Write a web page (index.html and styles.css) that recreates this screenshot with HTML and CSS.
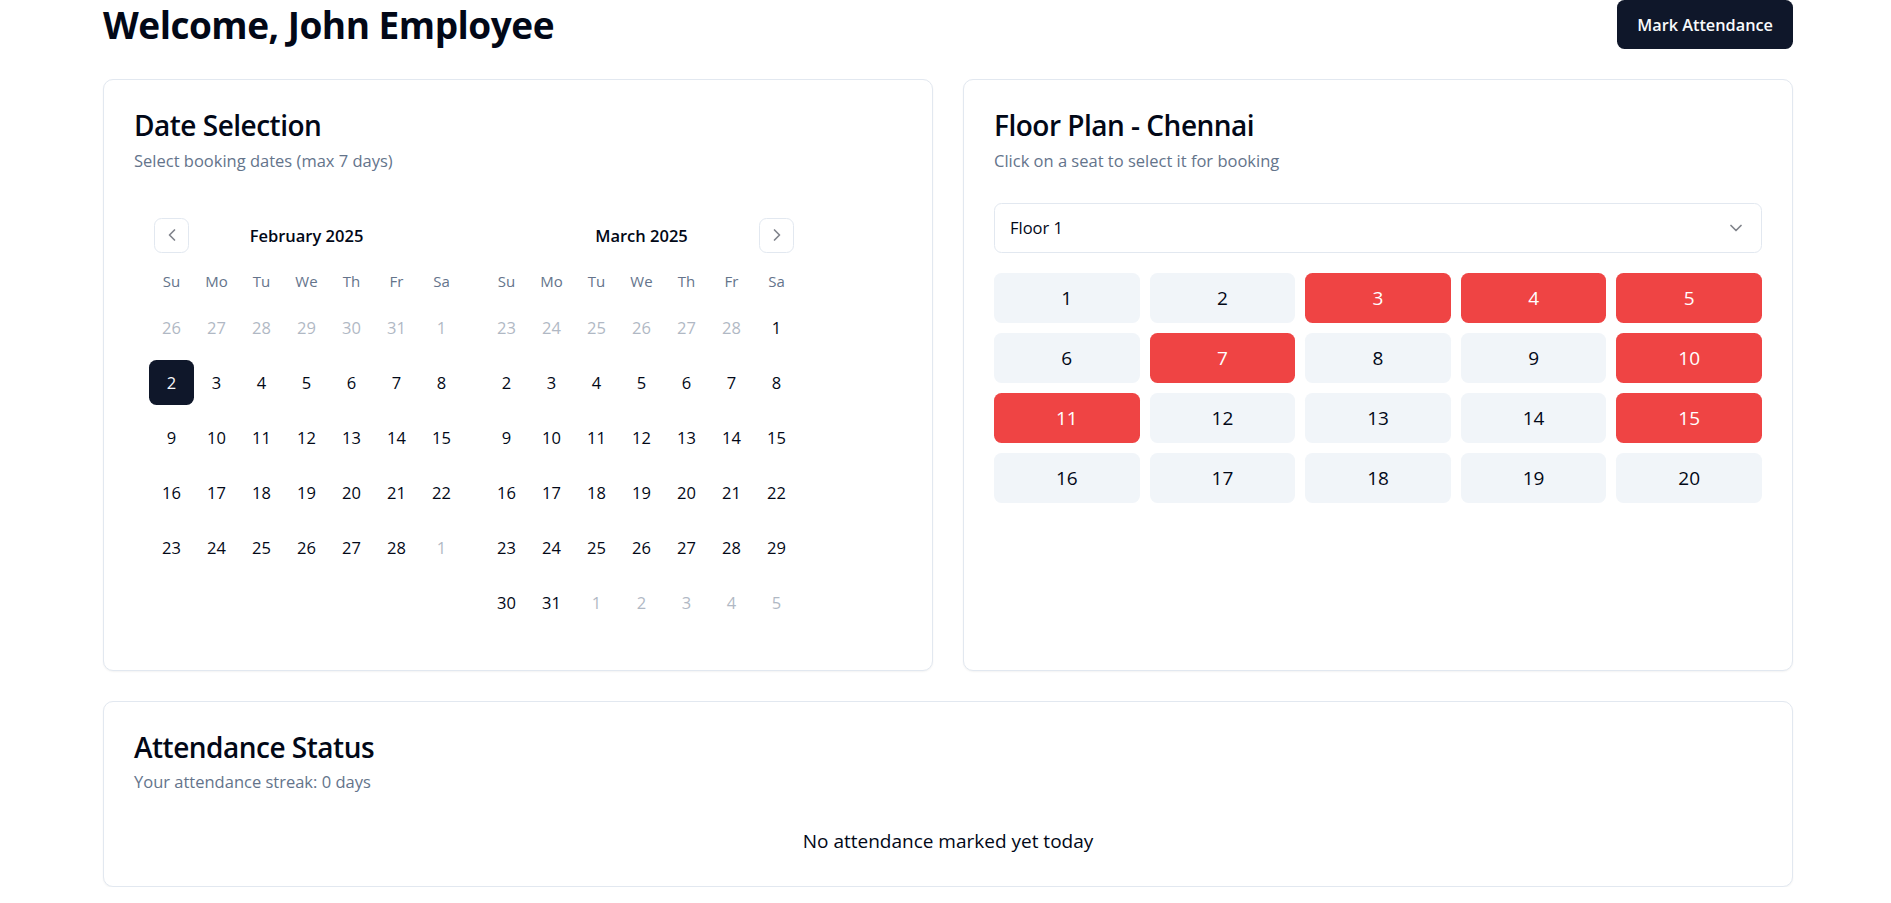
FILE: index.html
```html
<!DOCTYPE html>
<html lang="en">
<head>
<meta charset="utf-8">
<title>Dashboard</title>
<link rel="stylesheet" href="styles.css">
</head>
<body>
<main class="page">
  <header class="topbar">
    <h1 class="welcome">Welcome, John Employee</h1>
    <button class="btn-primary">Mark Attendance</button>
  </header>

  <section class="grid-two">
    <div class="card">
      <div class="card-header">
        <h2 class="card-title">Date Selection</h2>
        <p class="card-desc">Select booking dates (max 7 days)</p>
      </div>
      <div class="card-content">
        <div class="calendar">
          <div class="month">
            <div class="caption">
              <button class="nav-btn"><svg viewBox="0 0 24 24" width="20" height="20" fill="none" stroke="currentColor" stroke-width="2" stroke-linecap="round" stroke-linejoin="round"><path d="m15 18-6-6 6-6"/></svg></button>
              <span class="caption-label">February 2025</span>
              <span class="nav-spacer"></span>
            </div>
            <div class="days">
              <div class="head">Su</div><div class="head">Mo</div><div class="head">Tu</div><div class="head">We</div><div class="head">Th</div><div class="head">Fr</div><div class="head">Sa</div>
              <div class="day out">26</div><div class="day out">27</div><div class="day out">28</div><div class="day out">29</div><div class="day out">30</div><div class="day out">31</div><div class="day out">1</div>
              <div class="day selected">2</div><div class="day">3</div><div class="day">4</div><div class="day">5</div><div class="day">6</div><div class="day">7</div><div class="day">8</div>
              <div class="day">9</div><div class="day">10</div><div class="day">11</div><div class="day">12</div><div class="day">13</div><div class="day">14</div><div class="day">15</div>
              <div class="day">16</div><div class="day">17</div><div class="day">18</div><div class="day">19</div><div class="day">20</div><div class="day">21</div><div class="day">22</div>
              <div class="day">23</div><div class="day">24</div><div class="day">25</div><div class="day">26</div><div class="day">27</div><div class="day">28</div><div class="day out">1</div>
            </div>
          </div>
          <div class="month">
            <div class="caption">
              <span class="nav-spacer"></span>
              <span class="caption-label">March 2025</span>
              <button class="nav-btn"><svg viewBox="0 0 24 24" width="20" height="20" fill="none" stroke="currentColor" stroke-width="2" stroke-linecap="round" stroke-linejoin="round"><path d="m9 18 6-6-6-6"/></svg></button>
            </div>
            <div class="days">
              <div class="head">Su</div><div class="head">Mo</div><div class="head">Tu</div><div class="head">We</div><div class="head">Th</div><div class="head">Fr</div><div class="head">Sa</div>
              <div class="day out">23</div><div class="day out">24</div><div class="day out">25</div><div class="day out">26</div><div class="day out">27</div><div class="day out">28</div><div class="day">1</div>
              <div class="day">2</div><div class="day">3</div><div class="day">4</div><div class="day">5</div><div class="day">6</div><div class="day">7</div><div class="day">8</div>
              <div class="day">9</div><div class="day">10</div><div class="day">11</div><div class="day">12</div><div class="day">13</div><div class="day">14</div><div class="day">15</div>
              <div class="day">16</div><div class="day">17</div><div class="day">18</div><div class="day">19</div><div class="day">20</div><div class="day">21</div><div class="day">22</div>
              <div class="day">23</div><div class="day">24</div><div class="day">25</div><div class="day">26</div><div class="day">27</div><div class="day">28</div><div class="day">29</div>
              <div class="day">30</div><div class="day">31</div><div class="day out">1</div><div class="day out">2</div><div class="day out">3</div><div class="day out">4</div><div class="day out">5</div>
            </div>
          </div>
        </div>
      </div>
    </div>

    <div class="card">
      <div class="card-header">
        <h2 class="card-title">Floor Plan - Chennai</h2>
        <p class="card-desc">Click on a seat to select it for booking</p>
      </div>
      <div class="card-content">
        <div class="select">
          <span>Floor 1</span>
          <svg class="select-icon" viewBox="0 0 24 24" width="20" height="20" fill="none" stroke="currentColor" stroke-width="2" stroke-linecap="round" stroke-linejoin="round"><path d="m6 9 6 6 6-6"/></svg>
        </div>
        <div class="seats">
          <div class="seat">1</div><div class="seat">2</div><div class="seat booked">3</div><div class="seat booked">4</div><div class="seat booked">5</div>
          <div class="seat">6</div><div class="seat booked">7</div><div class="seat">8</div><div class="seat">9</div><div class="seat booked">10</div>
          <div class="seat booked">11</div><div class="seat">12</div><div class="seat">13</div><div class="seat">14</div><div class="seat booked">15</div>
          <div class="seat">16</div><div class="seat">17</div><div class="seat">18</div><div class="seat">19</div><div class="seat">20</div>
        </div>
      </div>
    </div>
  </section>

  <section class="card attendance">
    <div class="card-header">
      <h2 class="card-title">Attendance Status</h2>
      <p class="card-desc">Your attendance streak: 0 days</p>
    </div>
    <div class="card-content">
      <p class="empty">No attendance marked yet today</p>
    </div>
  </section>
</main>
</body>
</html>
```

FILE: styles.css
```css
* { box-sizing: border-box; }

html, body {
  margin: 0;
  padding: 0;
  background: #ffffff;
}

body {
  font-family: "Open Sans", "Noto Sans", "Liberation Sans", sans-serif;
  color: #020817;
  font-size: 19px;
}

.page {
  padding: 0 98px 0 103px;
}

.topbar {
  display: flex;
  align-items: center;
  justify-content: space-between;
  margin-bottom: 30px;
}

.welcome {
  margin: 0;
  font-size: 37px;
  line-height: 49px;
  font-weight: 700;
  letter-spacing: -0.5px;
}

.btn-primary {
  height: 49px;
  padding: 0 20px;
  border: 0;
  border-radius: 7.5px;
  background: #0f172a;
  color: #f8fafc;
  font-family: inherit;
  font-size: 16.3px;
  font-weight: 600;
  align-self: flex-start;
}

.grid-two {
  display: grid;
  grid-template-columns: 1fr 1fr;
  gap: 30px;
  margin-bottom: 30px;
}

.card {
  border: 1px solid #e2e8f0;
  border-radius: 10px;
  background: #fff;
  box-shadow: 0 1px 2px rgba(0, 0, 0, 0.05);
}

.card-header {
  padding: 30px;
  display: flex;
  flex-direction: column;
  gap: 7.5px;
}

.card-title {
  margin: 0;
  font-size: 28px;
  line-height: 30px;
  font-weight: 600;
  letter-spacing: -0.5px;
}

.card-desc {
  margin: 0;
  font-size: 16.5px;
  line-height: 25px;
  color: #64748b;
}

.card-content {
  padding: 0 30px 30px;
}

/* Calendar */
.calendar {
  display: flex;
  gap: 20px;
  padding: 15px;
}

.month {
  display: flex;
  flex-direction: column;
  gap: 15px;
  width: 315px;
}

.caption {
  display: grid;
  grid-template-columns: 35px 1fr 35px;
  align-items: center;
  height: 35px;
  padding: 0 5px;
}

.caption-label {
  text-align: center;
  font-size: 16.5px;
  font-weight: 600;
}

.nav-btn {
  width: 35px;
  height: 35px;
  padding: 0;
  display: flex;
  align-items: center;
  justify-content: center;
  border: 1px solid #e2e8f0;
  border-radius: 7.5px;
  background: transparent;
  color: rgba(2, 8, 23, 0.5);
}

.days {
  display: grid;
  grid-template-columns: repeat(7, 45px);
  grid-template-rows: 27px;
  grid-auto-rows: 45px;
  row-gap: 10px;
}

.head {
  display: flex;
  align-items: center;
  justify-content: center;
  font-size: 15px;
  color: #64748b;
}

.day {
  display: flex;
  align-items: center;
  justify-content: center;
  font-size: 16.5px;
  border-radius: 7.5px;
}

.day.out {
  color: #64748b;
  opacity: 0.5;
}

.day.selected {
  background: #0f172a;
  color: #f8fafc;
}

/* Floor plan */
.select {
  height: 50px;
  display: flex;
  align-items: center;
  justify-content: space-between;
  padding: 0 15px;
  border: 1px solid #e2e8f0;
  border-radius: 7.5px;
  font-size: 16.5px;
  margin-bottom: 20px;
}

.select-icon {
  color: #020817;
  opacity: 0.5;
}

.seats {
  display: grid;
  grid-template-columns: repeat(5, 1fr);
  grid-auto-rows: 50px;
  gap: 10px;
}

.seat {
  display: flex;
  align-items: center;
  justify-content: center;
  background: #f1f5f9;
  border-radius: 7.5px;
  font-size: 19px;
}

.seat.booked {
  background: #ef4444;
  color: #ffffff;
}

/* Attendance */
.empty {
  margin: 0;
  padding-top: 2px;
  text-align: center;
  font-size: 19px;
  line-height: 30px;
}
```
